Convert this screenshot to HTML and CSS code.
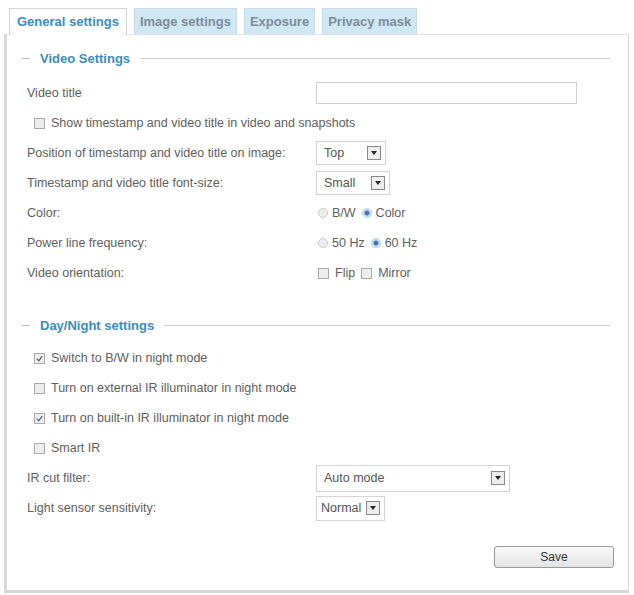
FILE: index.html
```html
<!DOCTYPE html>
<html>
  <head>
    <title>General settings</title>
    <link rel="stylesheet" href="styles.css">
  </head>
  <body>
    <div class="tabs">
      <div class="tab active">General settings</div>
      <div class="tab">Image settings</div>
      <div class="tab">Exposure</div>
      <div class="tab">Privacy mask</div>
    </div>
    <div class="panel">
      <div class="section-head"><span>Video Settings</span></div>
      <div class="rows">
        <div class="row">
          <label>Video title</label>
          <div class="control"><span class="textbox"></span></div>
        </div>
        <div class="row check-row">
          <span class="check"></span>
          <span>Show timestamp and video title in video and snapshots</span>
        </div>
        <div class="row">
          <label>Position of timestamp and video title on image:</label>
          <div class="control"><span class="select sel-top">Top<span class="arrow"></span></span></div>
        </div>
        <div class="row">
          <label>Timestamp and video title font-size:</label>
          <div class="control"><span class="select sel-small">Small<span class="arrow"></span></span></div>
        </div>
        <div class="row">
          <label>Color:</label>
          <div class="control">
            <span class="radio"></span><span class="opt">B/W</span>
            <span class="radio on"></span><span class="opt">Color</span>
          </div>
        </div>
        <div class="row">
          <label>Power line frequency:</label>
          <div class="control">
            <span class="radio"></span><span class="opt">50 Hz</span>
            <span class="radio on"></span><span class="opt">60 Hz</span>
          </div>
        </div>
        <div class="row">
          <label>Video orientation:</label>
          <div class="control">
            <span class="check"></span><span class="opt">Flip</span>
            <span class="check"></span><span class="opt">Mirror</span>
          </div>
        </div>
      </div>

      <div class="section-head second"><span>Day/Night settings</span></div>
      <div class="rows night">
        <div class="row check-row">
          <span class="check checked"><svg viewBox="0 0 10 10"><path d="M2 5.2 L4.2 7.6 L8 2.4" /></svg></span>
          <span>Switch to B/W in night mode</span>
        </div>
        <div class="row check-row">
          <span class="check"></span>
          <span>Turn on external IR illuminator in night mode</span>
        </div>
        <div class="row check-row">
          <span class="check checked"><svg viewBox="0 0 10 10"><path d="M2 5.2 L4.2 7.6 L8 2.4" /></svg></span>
          <span>Turn on built-in IR illuminator in night mode</span>
        </div>
        <div class="row check-row">
          <span class="check"></span>
          <span>Smart IR</span>
        </div>
        <div class="row">
          <label>IR cut filter:</label>
          <div class="control"><span class="select sel-wide">Auto mode<span class="arrow"></span></span></div>
        </div>
        <div class="row">
          <label>Light sensor sensitivity:</label>
          <div class="control"><span class="select sel-normal">Normal<span class="arrow"></span></span></div>
        </div>
      </div>

      <div class="actions">
        <button class="save">Save</button>
      </div>
    </div>
  </body>
</html>
```

FILE: styles.css
```css
body {
  margin: 0;
  background-color: #fff;
  font-family: "Liberation Sans", Arial, sans-serif;
  font-size: 12.5px;
  color: #5e5e5e;
}

.tabs {
  display: flex;
  gap: 7px;
  padding-top: 8px;
  margin-left: 9px;
}

.tab {
  height: 25px;
  line-height: 25px;
  padding: 0 5px;
  border: 1px solid #c9dde8;
  border-bottom: none;
  background-color: #cfe8f6;
  color: #7d8c96;
  font-weight: bold;
  font-size: 13px;
}

.tab.active {
  background-color: #fff;
  border-color: #d4d4d4;
  color: #3a8cc4;
  padding: 0 7px;
  position: relative;
  z-index: 1;
  height: 26px;
  margin-bottom: -1px;
}

.panel {
  margin: 0 5px 0 4px;
  border-style: solid;
  border-width: 1px 1px 3px 3px;
  border-color: #e2e2e2 #d8d8d8 #d8d8d8 #d8d8d8;
  padding: 15px 0 22px 0;
}

.section-head {
  display: flex;
  align-items: center;
  margin: 0 18px 0 15px;
  height: 16px;
  color: #3a8cc4;
  font-weight: bold;
  font-size: 13px;
}

.section-head::before {
  content: "";
  width: 8px;
  border-top: 1px solid #bbb;
}

.section-head::after {
  content: "";
  flex: 1;
  border-top: 1px solid #ccc;
}

.section-head span {
  padding: 0 10px;
}

.section-head.second {
  margin-top: 29px;
}

.rows {
  margin: 12px 0 0 20px;
}

.rows.night {
  margin-top: 10px;
}

.row {
  display: grid;
  grid-template-columns: 289px 1fr;
  align-items: center;
  height: 30px;
}

.row label {
  white-space: nowrap;
}

.check-row {
  display: flex;
  gap: 6px;
  padding-left: 7px;
}

.control {
  display: flex;
  align-items: center;
}

.textbox {
  display: block;
  width: 259px;
  height: 20px;
  border: 1px solid #d0d0d0;
  background: #fff;
}

.select {
  display: flex;
  align-items: center;
  justify-content: space-between;
  padding: 0 2px 0 7px;
  border: 1px solid #d4d4d4;
  color: #555;
  box-sizing: border-box;
  height: 24px;
}

.sel-top {
  width: 70px;
}

.sel-small {
  width: 74px;
}

.sel-wide {
  width: 194px;
  height: 27px;
}

.sel-normal {
  width: 69px;
  height: 25px;
  padding-left: 4px;
}

.arrow {
  position: relative;
  width: 12px;
  height: 12px;
  border: 1px solid #888;
  background: #eee;
  margin-right: 2px;
}

.arrow::after {
  content: "";
  position: absolute;
  left: 3px;
  top: 4px;
  border-left: 3px solid transparent;
  border-right: 3px solid transparent;
  border-top: 4px solid #222;
}

.check {
  display: inline-block;
  width: 9px;
  height: 9px;
  border: 1px solid #aaa;
  background: #eee;
  flex-shrink: 0;
}

.check svg {
  display: block;
  width: 9px;
  height: 9px;
}

.check svg path {
  fill: none;
  stroke: #4a5f78;
  stroke-width: 1.4;
}

.radio {
  display: inline-block;
  width: 8px;
  height: 8px;
  border-radius: 50%;
  border: 1px solid #ccc;
  background: #eee;
  margin-left: 2px;
}

.radio.on {
  background: radial-gradient(circle, #3b79b0 0, #3b79b0 2px, #cfe0ee 3px);
  border-color: #bcd0e0;
}

.opt {
  margin: 0 4px 0 4px;
}

.control .check {
  margin-left: 2px;
}

.control .check + .opt {
  margin: 0 4px 0 6px;
}

.actions {
  display: flex;
  justify-content: flex-end;
  margin: 23px 14px 0 0;
}

.save {
  width: 120px;
  height: 22px;
  border: 1px solid #999;
  border-radius: 3px;
  background: linear-gradient(#fafafa, #e4e4e4);
  font-family: "Liberation Sans", Arial, sans-serif;
  font-size: 12px;
  color: #333;
}
```
